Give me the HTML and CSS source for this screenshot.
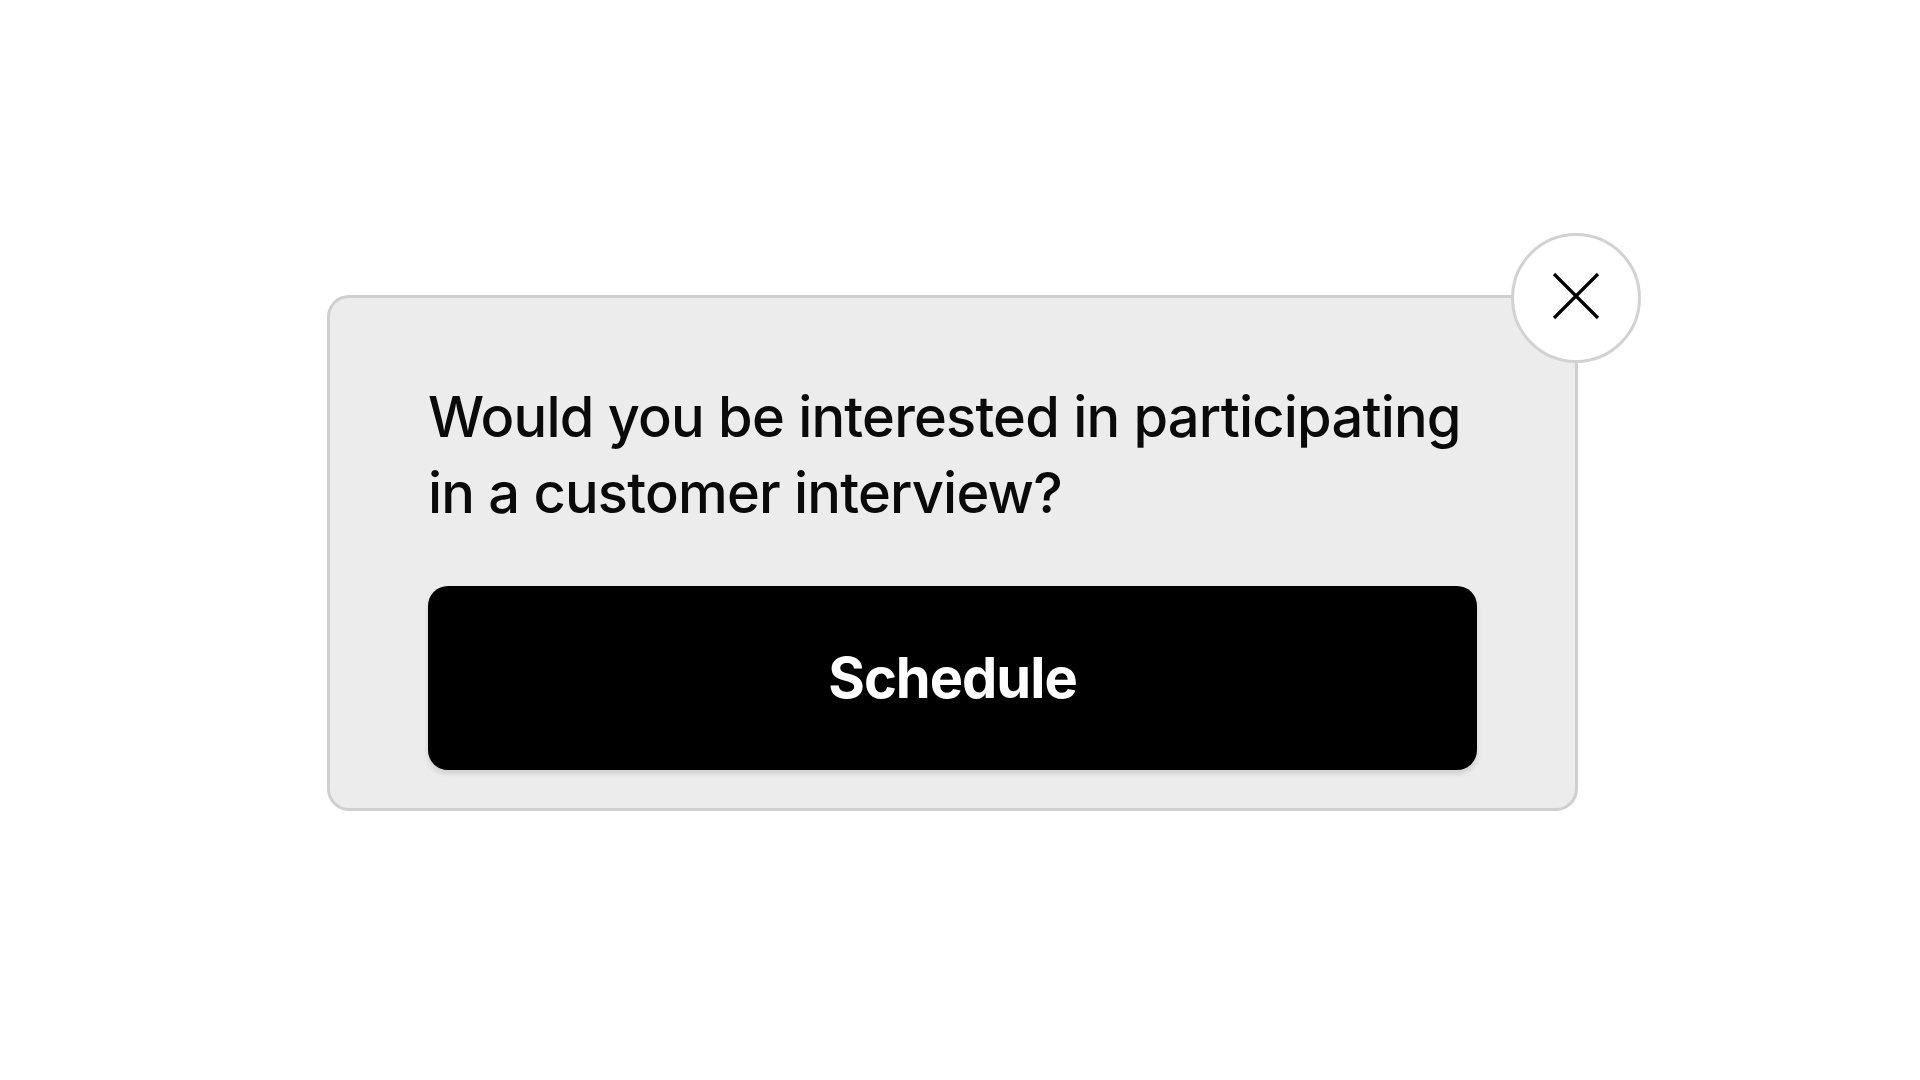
FILE: index.html
```html
<!DOCTYPE html>
<html lang="en">
<head>
<meta charset="utf-8">
<title>Interview prompt</title>
<link rel="stylesheet" href="styles.css">
</head>
<body>
<main class="stage">
  <section class="card">
    <p class="question">Would you be interested in participating in a customer interview?</p>
    <button class="cta" type="button">Schedule</button>
    <button class="close" type="button" aria-label="Close">
      <svg viewBox="0 0 48 48" width="48" height="48" aria-hidden="true">
        <path d="M2 2 L46 46 M46 2 L2 46" stroke="#000" stroke-width="3.2" stroke-linecap="butt" fill="none"/>
      </svg>
    </button>
  </section>
</main>
</body>
</html>
```
FILE: styles.css
```css
html, body {
  margin: 0;
  padding: 0;
  background: #ffffff;
}
body {
  font-family: Inter, "Noto Sans", "Liberation Sans", sans-serif;
  color: #000;
}
.stage {
  padding: 295px 0 0 327px;
}
.card {
  position: relative;
  box-sizing: border-box;
  width: 1251px;
  height: 516px;
  padding: 81px 98px 0 98px;
  background: #ececec;
  border: 3px solid #cfcfcf;
  border-radius: 22px;
  display: flex;
  flex-direction: column;
}
.question {
  margin: 0;
  font-size: 56px;
  line-height: 76px;
  font-weight: 500;
  letter-spacing: -0.8px;
  color: #0a0a0a;
}
.cta {
  margin-top: 55px;
  height: 184px;
  width: 100%;
  border: none;
  border-radius: 20px;
  background: #000;
  color: #fff;
  font-family: inherit;
  font-size: 56px;
  font-weight: 700;
  letter-spacing: -1px;
  box-shadow: 0 4px 5px rgba(0, 0, 0, 0.12);
  cursor: pointer;
}
.close {
  position: absolute;
  top: -65px;
  right: -66px;
  box-sizing: border-box;
  width: 130px;
  height: 130px;
  border-radius: 50%;
  background: #fff;
  border: 3px solid #d2d2d2;
  display: flex;
  align-items: center;
  justify-content: center;
  padding: 0;
  cursor: pointer;
}
.close svg {
  display: block;
  margin-top: -4px;
}
```
